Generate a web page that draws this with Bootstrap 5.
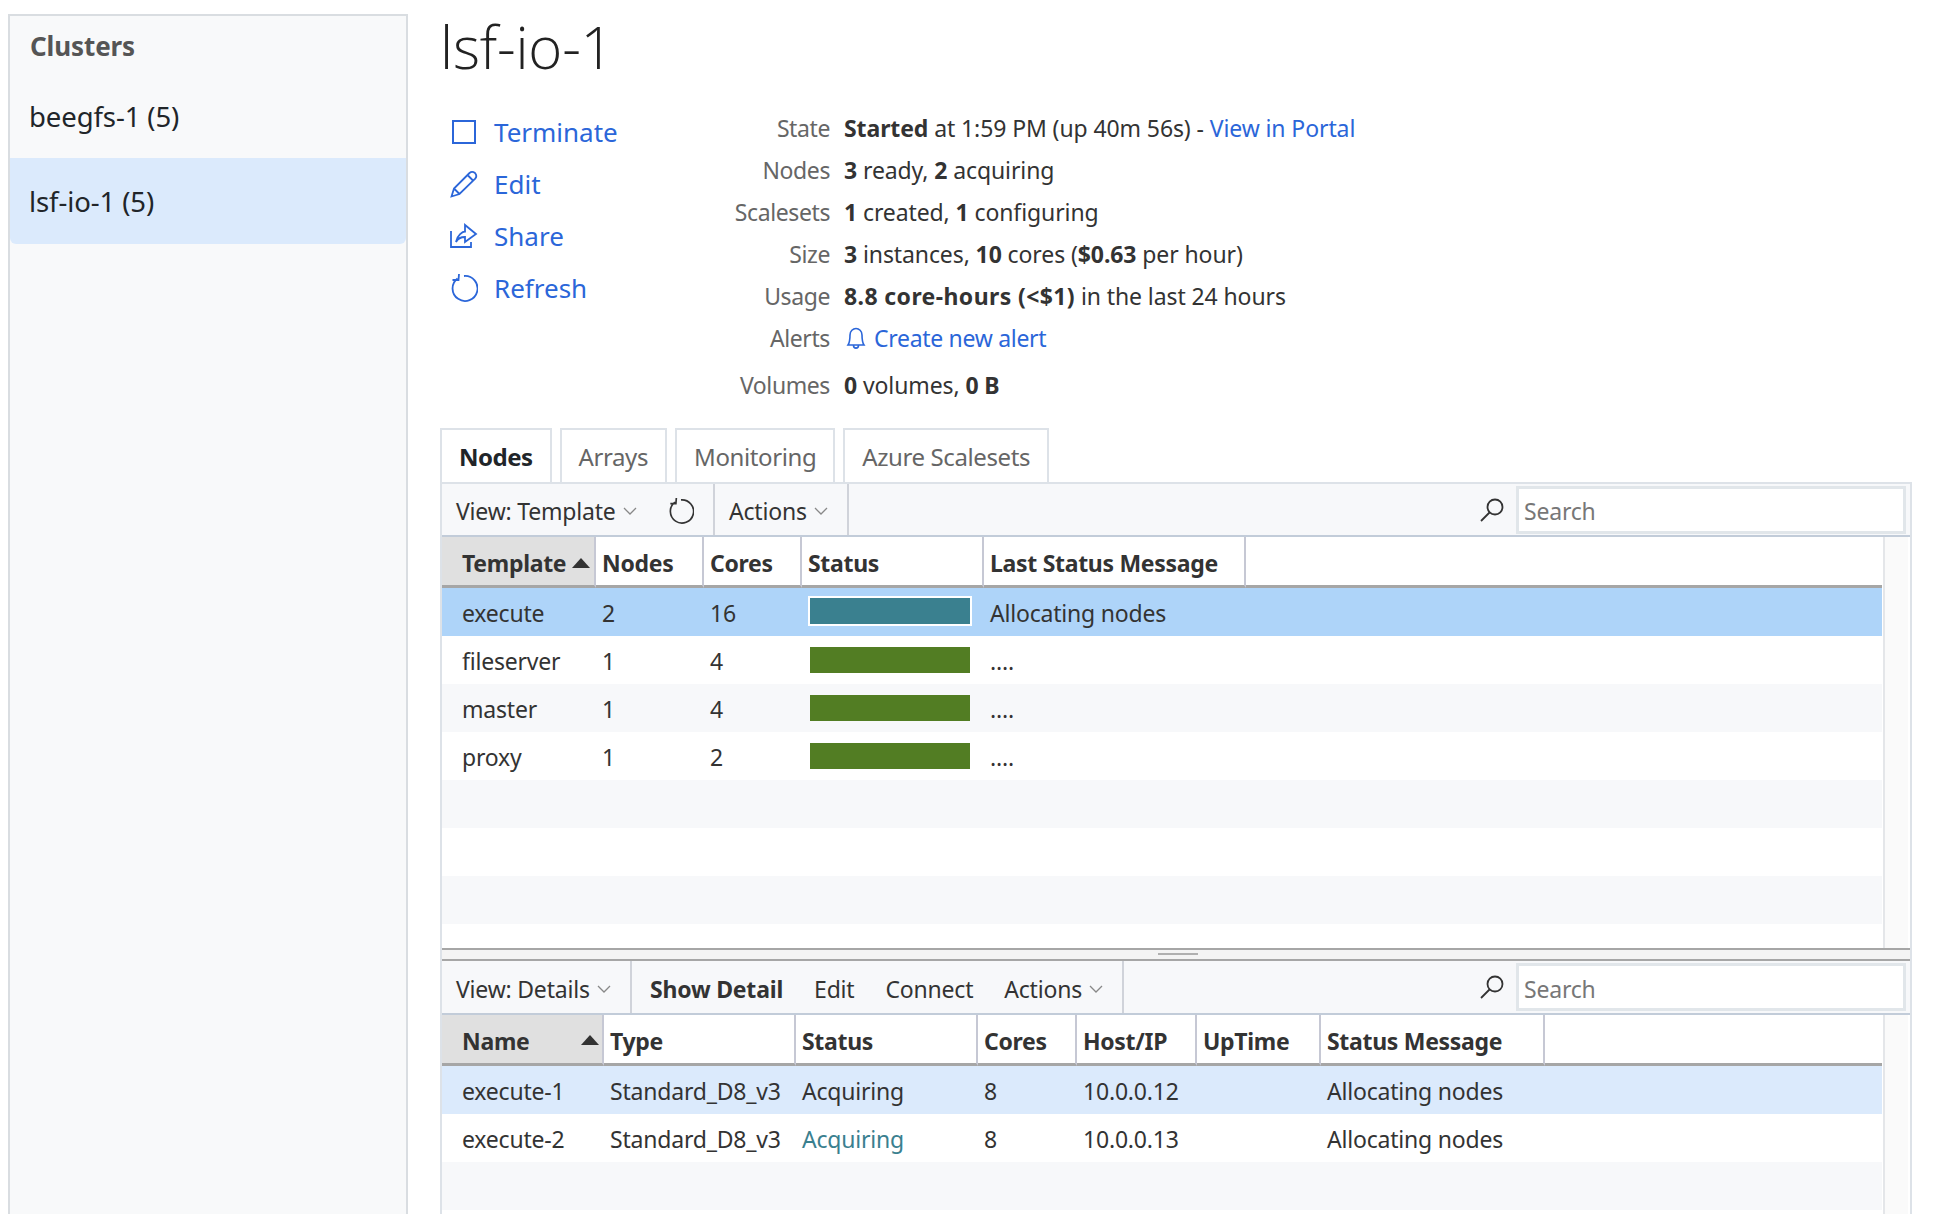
<!DOCTYPE html>
<html lang="en">
<head>
    <meta charset="UTF-8">
    <title>lsf-io-1</title>
    <link rel="stylesheet" href="https://cdn.jsdelivr.net/npm/bootstrap@5.3.0/dist/css/bootstrap.min.css">
    <style>
        html, body { height: 1214px; overflow: hidden; }
        body { font-family: "Noto Sans", "Open Sans", sans-serif; font-size: 23px; color: #333; background: #fff; letter-spacing: -0.2px; }
        a { color: #2b66d9; text-decoration: none; }
        b { font-weight: 700; }

        .side-panel { width: 400px; margin: 14px 0 0 8px; background: #f8f9fa; border: 2px solid #d9dde1; border-bottom: 0; flex: none; }
        .side-title { height: 57px; padding: 11px 0 0 20px; font-weight: 700; font-size: 26px; color: #555; letter-spacing: -0.1px; }
        .side-item { height: 85px; display: flex; align-items: center; padding: 2px 0 0 19px; font-size: 27.5px; color: #212529; background: transparent; border: 0; border-radius: 0; letter-spacing: -0.1px; }
        .side-item.picked { height: 86px; background: #dbeafc; color: #212529; }

        .main-col { width: 1472px; margin-left: 32px; flex: none; }
        .page-title { height: 107px; margin: 0; padding-top: 9px; font-size: 58px; line-height: 76px; font-weight: 300; font-family: "Open Sans", sans-serif; color: #222; letter-spacing: -0.2px; }

        .info-head { height: 321px; }
        .action-list { width: 190px; padding-left: 10px; margin-top: -1px; }
        .action-row { height: 52px; font-size: 26px; gap: 16px; letter-spacing: 0; }
        .action-row svg { width: 28px; height: 28px; flex: none; }
        .fact-row { height: 42px; align-items: center; letter-spacing: -0.1px; }
        .fact-row.spaced { margin-top: 5px; }
        .fact-name { width: 200px; text-align: right; color: #666; margin-right: 14px; flex: none; letter-spacing: -0.4px; }
        .bell-mark { margin-left: 2px; }
        .bell-link { letter-spacing: -0.3px; }
        .wide-bold { letter-spacing: 0.4px; }

        .tab-strip { height: 54px; gap: 8px; padding: 0; border: 0; }
        .tab-item { height: 54px; padding: 2px 17px 0; display: flex; align-items: center; border: 2px solid #dde2e8; border-bottom: 0; color: #666; font-size: 24px; letter-spacing: -0.4px; }
        .tab-item.on { color: #212529; font-weight: 700; padding: 2px 17px 0; letter-spacing: -0.5px; }

        .grid-panel { width: 1472px; height: 732px; border: 2px solid #dde2e8; border-bottom: 0; overflow: hidden; }
        .tool-row { height: 54px; background: #f7f8fa; border-bottom: 2px solid #c2ccd9; }
        .tool-row.upper { height: 53px; }
        .tool-group { height: 100%; display: flex; align-items: center; border-right: 2px solid #d0d3da; padding: 3px 0 0 14px; gap: 7px; color: #333; flex: none; }
        .group-view { width: 273px; }
        .group-actions { width: 134px; padding-left: 14px; }
        .group-details { width: 190px; padding-top: 4px; }
        .group-commands { width: 492px; padding: 4px 0 0 18px; gap: 31px; }
        .menu-label { display: flex; align-items: center; gap: 7px; }
        .search-zone { margin-left: auto; gap: 12px; padding-right: 4px; }
        .search-box { width: 390px; height: 48px; border: 3px solid #e1e6ea; border-radius: 0; padding: 3px 5px 0; font-size: 23px; letter-spacing: -0.2px; background: #fff; box-shadow: none; }
        .search-box::placeholder { color: #777; }

        .grid-body { position: relative; overflow: hidden; }
        .upper-body { height: 411px; }
        .lower-body { height: 199px; }
        .scroll-track { position: absolute; top: 0; right: 2px; bottom: 0; width: 25px; background: #fafafa; border-left: 2px solid #e4e6e9; }
        .data-table { table-layout: fixed; width: 1440px; margin: 0; border-collapse: separate; border-spacing: 0; --bs-table-bg: transparent; }
        .data-table th, .data-table td { padding: 2px 0 0 6px; border: 0; color: #333; white-space: nowrap; overflow: visible; vertical-align: middle; }
        .data-table th { height: 51px; padding-top: 4px; font-weight: 700; letter-spacing: -0.3px; border-bottom: 3px solid #a6a6a6; border-right: 2px solid #c6c8d4; }
        .data-table th.blank { border-right: 0; }
        .data-table th.sorted { background: #e0e0e0; padding-left: 20px; border-right: 2px solid #c6c8d4; }
        .data-table td { height: 48px; }
        .data-table td.first { padding-left: 20px; }
        .sort-mark { display: inline-block; width: 0; height: 0; border-left: 9px solid transparent; border-right: 9px solid transparent; border-bottom: 10px solid #333; vertical-align: 4px; }
        .sort-far { float: right; margin: 11px 3px 0 0; }
        .stripe td { background: #f7f8fa; }
        .picked-strong td { background: #aed4f9; }
        .picked-soft td { background: #dbeafc; }
        .status-bar { height: 26px; width: 160px; margin: -2px 0 0 2px; background: #527d23; }
        .status-bar.busy { width: 164px; height: 30px; margin: -4px 0 0 0; background: #3a808f; border: 2px solid #fff; }
        .teal-text { color: #3a808f !important; }

        .split-bar { height: 13px; background: #f4f4f4; border-top: 2px solid #a6a6a6; border-bottom: 2px solid #a6a6a6; position: relative; }
        .split-grip { position: absolute; left: 716px; top: 3px; width: 40px; height: 2px; background: #b0b0b0; }
        .down-mark { width: 14px; height: 8px; }
    </style>
</head>
<body class="d-flex">

    <div class="side-panel">
        <div class="side-title">Clusters</div>
        <div class="list-group">
            <a href="#" class="list-group-item side-item">beegfs-1 (5)</a>
            <a href="#" class="list-group-item side-item picked">lsf-io-1 (5)</a>
        </div>
    </div>

    <div class="main-col">
        <h1 class="page-title">lsf-io-1</h1>

        <div class="info-head d-flex">
            <div class="action-list">
                <a href="#" class="action-row d-flex align-items-center">
                    <svg viewBox="0 0 28 28" fill="none" stroke="currentColor" stroke-width="2"><rect x="3" y="3" width="22" height="22"/></svg>
                    Terminate
                </a>
                <a href="#" class="action-row d-flex align-items-center">
                    <svg viewBox="0 0 28 28" fill="none" stroke="currentColor" stroke-width="1.8"><path d="M1.5 26.5 4 18.5 19.5 3Q22 .8 25 3 27.5 6 25.2 8.7L9.5 24ZM4 18.5l5.5 5.5M17.5 5l5.5 5.5"/></svg>
                    Edit
                </a>
                <a href="#" class="action-row d-flex align-items-center">
                    <svg viewBox="0 0 28 28" fill="none" stroke="currentColor" stroke-width="1.8"><path d="M1 9V25H21V20M6 20C7 13 13 9.5 15 9.5V3L26 12 15 20V15C11 15 8 16 6 20Z"/></svg>
                    Share
                </a>
                <a href="#" class="action-row d-flex align-items-center">
                    <svg viewBox="0 0 28 28" fill="none" stroke="currentColor" stroke-width="1.8"><path d="M7.500 4.500A12.500 12.500 0 1 0 14 2M9 0 8.500 6 2.500 6"/></svg>
                    Refresh
                </a>
            </div>
            <div>
                <div class="fact-row d-flex"><span class="fact-name">State</span><span><b>Started</b> at 1:59 PM (up 40m 56s) - <a href="#">View in Portal</a></span></div>
                <div class="fact-row d-flex"><span class="fact-name">Nodes</span><span><b>3</b> ready, <b>2</b> acquiring</span></div>
                <div class="fact-row d-flex"><span class="fact-name">Scalesets</span><span><b>1</b> created, <b>1</b> configuring</span></div>
                <div class="fact-row d-flex"><span class="fact-name">Size</span><span><b>3</b> instances, <b>10</b> cores (<b>$0.63</b> per hour)</span></div>
                <div class="fact-row d-flex"><span class="fact-name">Usage</span><span><b class="wide-bold">8.8 core-hours (&lt;$1)</b> in the last 24 hours</span></div>
                <div class="fact-row d-flex"><span class="fact-name">Alerts</span><a href="#" class="bell-link d-flex align-items-center gap-2">
                    <svg class="bell-mark" width="20" height="24" viewBox="0 0 20 24" fill="none" stroke="currentColor" stroke-width="1.6"><path d="M2 19C4 16 4 13 4 9 4 5 7 2.500 10 2.500S16 5 16 9C16 13 16 16 18 19ZM7.500 19.500C7.500 23 12.500 23 12.500 19.500"/></svg>
                    Create new alert</a></div>
                <div class="fact-row spaced d-flex"><span class="fact-name">Volumes</span><span><b>0</b> volumes, <b>0 B</b></span></div>
            </div>
        </div>

        <div class="tab-strip nav">
            <a href="#" class="tab-item on">Nodes</a>
            <a href="#" class="tab-item">Arrays</a>
            <a href="#" class="tab-item">Monitoring</a>
            <a href="#" class="tab-item">Azure Scalesets</a>
        </div>

        <div class="grid-panel">
            <div class="tool-row upper d-flex align-items-center">
                <div class="tool-group group-view">
                    <span>View: Template</span>
                    <svg class="down-mark" viewBox="0 0 14 8" fill="none" stroke="#888" stroke-width="1.3"><path d="M1 1l6 6 6-6"/></svg>
                    <svg class="ms-4" width="26" height="26" viewBox="0 0 28 28" fill="none" stroke="#333" stroke-width="1.8"><path d="M7.500 4.500A12.500 12.500 0 1 0 14 2M9 0 8.500 6 2.500 6"/></svg>
                </div>
                <div class="tool-group group-actions">
                    <span>Actions</span>
                    <svg class="down-mark" viewBox="0 0 14 8" fill="none" stroke="#888" stroke-width="1.3"><path d="M1 1l6 6 6-6"/></svg>
                </div>
                <div class="search-zone d-flex align-items-center">
                    <svg width="24" height="24" viewBox="0 0 24 24" fill="none" stroke="#333" stroke-width="1.8"><circle cx="15" cy="9" r="7.500"/><path d="M9.500 14.500 1 23"/></svg>
                    <input class="form-control search-box" placeholder="Search">
                </div>
            </div>
            <div class="grid-body upper-body">
                <div class="scroll-track"></div>
                <table class="table data-table">
                    <colgroup><col style="width:154px"><col style="width:108px"><col style="width:98px"><col style="width:182px"><col style="width:262px"><col></colgroup>
                    <thead><tr>
                        <th class="sorted">Template <span class="sort-mark"></span></th><th>Nodes</th><th>Cores</th><th>Status</th><th>Last Status Message</th><th class="blank"></th>
                    </tr></thead>
                    <tbody>
                        <tr class="picked-strong"><td class="first">execute</td><td>2</td><td>16</td><td><div class="status-bar busy"></div></td><td colspan="2">Allocating nodes</td></tr>
                        <tr><td class="first">fileserver</td><td>1</td><td>4</td><td><div class="status-bar"></div></td><td colspan="2">....</td></tr>
                        <tr class="stripe"><td class="first">master</td><td>1</td><td>4</td><td><div class="status-bar"></div></td><td colspan="2">....</td></tr>
                        <tr><td class="first">proxy</td><td>1</td><td>2</td><td><div class="status-bar"></div></td><td colspan="2">....</td></tr>
                        <tr class="stripe"><td colspan="6"></td></tr>
                        <tr><td colspan="6"></td></tr>
                        <tr class="stripe"><td colspan="6"></td></tr>
                    </tbody>
                </table>
            </div>
            <div class="split-bar"><div class="split-grip"></div></div>
            <div class="tool-row d-flex align-items-center">
                <div class="tool-group group-details">
                    <span>View: Details</span>
                    <svg class="down-mark" viewBox="0 0 14 8" fill="none" stroke="#888" stroke-width="1.3"><path d="M1 1l6 6 6-6"/></svg>
                </div>
                <div class="tool-group group-commands">
                    <b>Show Detail</b>
                    <span>Edit</span>
                    <span>Connect</span>
                    <span class="menu-label">Actions
                        <svg class="down-mark" viewBox="0 0 14 8" fill="none" stroke="#888" stroke-width="1.3"><path d="M1 1l6 6 6-6"/></svg>
                    </span>
                </div>
                <div class="search-zone d-flex align-items-center">
                    <svg width="24" height="24" viewBox="0 0 24 24" fill="none" stroke="#333" stroke-width="1.8"><circle cx="15" cy="9" r="7.500"/><path d="M9.500 14.500 1 23"/></svg>
                    <input class="form-control search-box" placeholder="Search">
                </div>
            </div>
            <div class="grid-body lower-body">
                <div class="scroll-track"></div>
                <table class="table data-table">
                    <colgroup><col style="width:162px"><col style="width:192px"><col style="width:182px"><col style="width:99px"><col style="width:120px"><col style="width:124px"><col style="width:224px"><col></colgroup>
                    <thead><tr>
                        <th class="sorted"><span class="sort-mark sort-far"></span>Name</th><th>Type</th><th>Status</th><th>Cores</th><th>Host/IP</th><th>UpTime</th><th>Status Message</th><th class="blank"></th>
                    </tr></thead>
                    <tbody>
                        <tr class="picked-soft"><td class="first">execute-1</td><td>Standard_D8_v3</td><td>Acquiring</td><td>8</td><td>10.0.0.12</td><td></td><td colspan="2">Allocating nodes</td></tr>
                        <tr><td class="first">execute-2</td><td>Standard_D8_v3</td><td class="teal-text">Acquiring</td><td>8</td><td>10.0.0.13</td><td></td><td colspan="2">Allocating nodes</td></tr>
                        <tr class="stripe"><td colspan="8"></td></tr>
                    </tbody>
                </table>
            </div>
        </div>
    </div>

    <script src="https://cdn.jsdelivr.net/npm/bootstrap@5.3.0/dist/js/bootstrap.bundle.min.js"></script>
</body>
</html>
